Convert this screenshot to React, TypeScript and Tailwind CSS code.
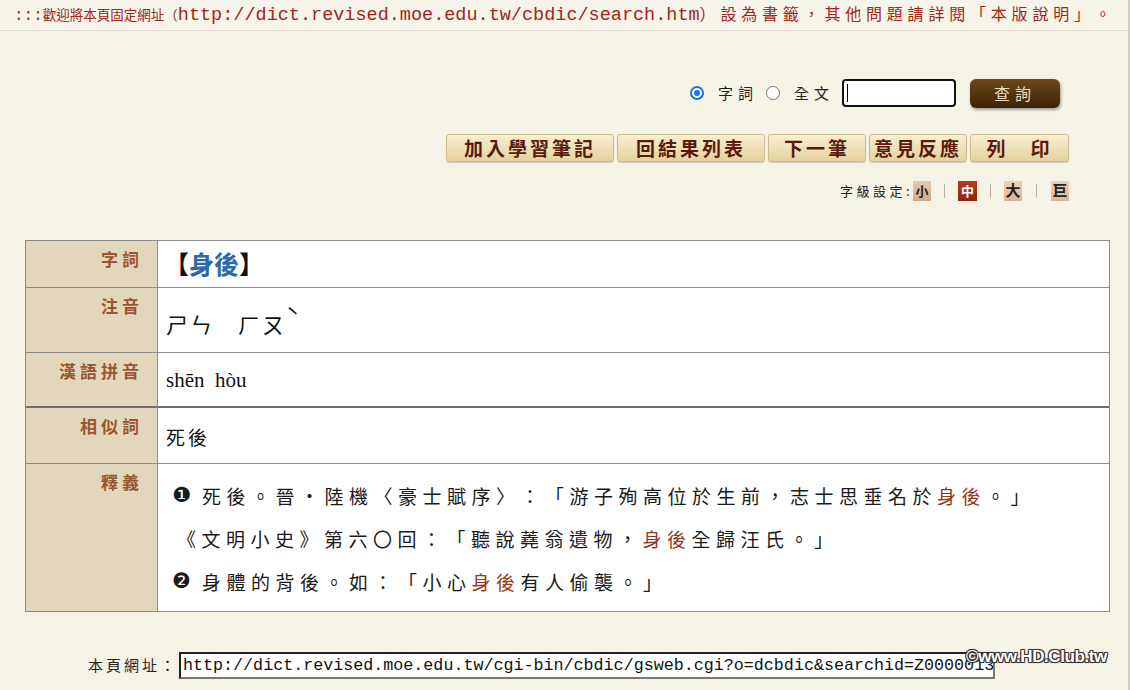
import React from "react";

const cjk = "font-['Noto_Sans_CJK_TC',sans-serif]";

function Radio({ checked }: { checked?: boolean }) {
  return checked ? (
    <span className="inline-flex w-[14px] h-[14px] rounded-full border-2 border-[#1a73e8] bg-white items-center justify-center">
      <span className="w-[6px] h-[6px] rounded-full bg-[#1a73e8]" />
    </span>
  ) : (
    <span className="inline-block w-[14px] h-[14px] rounded-full border border-[#767676] bg-white" />
  );
}

const actions = [
  { label: "加入學習筆記", w: "w-[168px]" },
  { label: "回結果列表", w: "w-[148px]" },
  { label: "下一筆", w: "w-[98px]" },
  { label: "意見反應", w: "w-[98px]" },
  { label: "列　印", w: "w-[99px]" },
];

const Hi = ({ children }: { children: React.ReactNode }) => (
  <span className="text-[#8f3a1c]">{children}</span>
);

function Row({
  label,
  h,
  thick,
  children,
}: {
  label: string;
  h: string;
  thick?: boolean;
  children: React.ReactNode;
}) {
  const b = thick ? "border-b-2 border-b-[#6f6f6f]" : "border-b border-b-[#8c8c8c]";
  return (
    <div className="flex">
      <div
        className={`w-[132px] shrink-0 ${h} ${b} border-r border-r-[#8c8c8c] bg-[#e2d7bb] text-right pr-[14px] pt-[7px] text-[17px] leading-[22px] font-bold tracking-[4px] text-[#9b5631]`}
      >
        {label}
      </div>
      <div className={`flex-1 ${h} ${b} bg-white flex items-center pl-[8px]`}>{children}</div>
    </div>
  );
}

export default function App() {
  return (
    <div
      className={`relative w-[1130px] h-[690px] overflow-hidden bg-[#f5f2e6] border-r-2 border-[#d3cec1] [text-spacing-trim:space-all] ${cjk}`}
    >
      {/* notice bar */}
      <div className="h-[31px] bg-[#f7f4ea] border-b border-[#e4dfd0] pl-[14px] pt-[2px] leading-[22px] text-[#a3241c] whitespace-nowrap">
        <span className="text-[16px] font-['Liberation_Mono',monospace]">:::</span>
        <span className="text-[13.5px]">歡迎將本頁固定網址（</span>
        <span className="text-[18.5px] font-['Liberation_Mono',monospace]">http://dict.revised.moe.edu.tw/cbdic/search.htm</span>
        <span className="text-[16px] tracking-[4.8px]">）設為書籤，其他問題請詳閱「本版說明」。</span>
      </div>

      {/* search */}
      <div className="flex justify-end items-center pr-[68px] mt-[47px] h-[30px] text-[15px] text-[#222]">
        <Radio checked />
        <span className="ml-[14px] tracking-[5px]">字詞</span>
        <span className="ml-[8px] flex"><Radio /></span>
        <span className="ml-[14px] tracking-[5px]">全文</span>
        <div className="ml-[8px] w-[114px] h-[28px] border-2 border-[#111] rounded-[4px] bg-white flex items-center pl-[3px]">
          <span className="w-px h-[18px] bg-black" />
        </div>
        <button className="ml-[14px] w-[90px] h-[29px] rounded-[6px] bg-gradient-to-b from-[#6e481b] to-[#3c2407] text-[#eadfc4] text-[16px] tracking-[5px] shadow-[1px_2px_3px_rgba(0,0,0,0.35)]">
          查詢
        </button>
      </div>

      {/* action buttons */}
      <div className="flex justify-end gap-[3px] pr-[59px] mt-[26px]">
        {actions.map((a) => (
          <button
            key={a.label}
            className={`${a.w} h-[28px] rounded-[3px] border border-[#cdbb8a] bg-gradient-to-b from-[#f8efd2] to-[#e4d19e] text-[19px] leading-[26px] font-bold tracking-[3px] text-[#5b1a0b] shadow-[0_1px_1px_rgba(0,0,0,0.15)]`}
          >
            {a.label}
          </button>
        ))}
      </div>

      {/* font size */}
      <div className="flex justify-end items-center pr-[59px] mt-[18px] h-[21px] text-[13px] text-[#222]">
        <span className="tracking-[3.5px]">字級設定:</span>
        <span className="w-[18px] h-[20px] bg-gradient-to-b from-[#e6c9ae] to-[#d2ac8c] flex items-center justify-center font-bold">小</span>
        <span className="mx-[13px] w-px h-[14px] bg-[#b5b0a5]" />
        <span className="w-[19px] h-[20px] bg-gradient-to-b from-[#b53c1e] to-[#8e2510] text-white flex items-center justify-center font-bold">中</span>
        <span className="mx-[13px] w-px h-[14px] bg-[#b5b0a5]" />
        <span className="w-[18px] h-[20px] bg-gradient-to-b from-[#ead2bb] to-[#d8b799] flex items-center justify-center font-bold text-[15px]">大</span>
        <span className="mx-[14px] w-px h-[14px] bg-[#b5b0a5]" />
        <span className="w-[18px] h-[20px] bg-gradient-to-b from-[#ead2bb] to-[#d8b799] flex items-center justify-center font-bold text-[15px]">巨</span>
      </div>

      {/* entry table */}
      <div className="ml-[25px] mt-[39px] w-[1085px] border-t border-l border-r border-[#8c8c8c]">
        <Row label="字詞" h="h-[47px]">
          <span className="text-[25px] font-bold text-[#111] -ml-[2px]">
            【<span className="text-[#2b6aa6]">身後</span>】
          </span>
        </Row>
        <Row label="注音" h="h-[65px]">
          <span className="text-[22px] text-[#111] pt-[6px] tracking-[2px]">
            ㄕㄣ　ㄏㄡ<span className="relative -top-[8px]">ˋ</span>
          </span>
        </Row>
        <Row label="漢語拼音" h="h-[55px]" thick>
          <span className="text-[21px] text-[#111] font-['Liberation_Serif',serif] pt-[2px]">shēn&nbsp;&nbsp;hòu</span>
        </Row>
        <Row label="相似詞" h="h-[56px]">
          <span className="text-[19px] text-[#111] pt-[4px] tracking-[3px]">死後</span>
        </Row>
        <div className="flex">
          <div className="w-[132px] shrink-0 h-[148px] border-b border-r border-[#8c8c8c] bg-[#e2d7bb] text-right pr-[14px] pt-[7px] text-[17px] leading-[22px] font-bold tracking-[4px] text-[#9b5631]">
            釋義
          </div>
          <div className="flex-1 h-[148px] border-b border-[#8c8c8c] bg-white pt-[10px] pl-[14px] text-[19px] leading-[43px] tracking-[5.5px] text-[#1a1a1a] whitespace-nowrap">
            <div className="flex items-center">
              <span className="w-[30px] text-[21px] font-['DejaVu_Sans',sans-serif] tracking-normal">❶</span>
              <span>
                死後。晉・陸機〈豪士賦序〉：「游子殉高位於生前，志士思垂名於<Hi>身後</Hi>。」
              </span>
            </div>
            <div className="pl-[5px]">
              《文明小史》第六〇回：「聽說蕘翁遺物，<Hi>身後</Hi>全歸汪氏。」
            </div>
            <div className="flex items-center">
              <span className="w-[30px] text-[21px] font-['DejaVu_Sans',sans-serif] tracking-normal">❷</span>
              <span>
                身體的背後。如：「小心<Hi>身後</Hi>有人偷襲。」
              </span>
            </div>
          </div>
        </div>
      </div>

      {/* page url */}
      <div className="flex items-center ml-[88px] mt-[40px]">
        <span className="text-[15px] tracking-[3px] text-[#222]">本頁網址：</span>
        <div className="ml-[1px] w-[816px] h-[27px] border-2 border-t-[#222] border-l-[#222] border-b-[#777] border-r-[#777] bg-white overflow-hidden whitespace-nowrap pl-[2px] text-[16.7px] leading-[23px] font-['Liberation_Mono',monospace] text-[#111]">
          http://dict.revised.moe.edu.tw/cgi-bin/cbdic/gsweb.cgi?o=dcbdic&amp;searchid=Z0000013
        </div>
      </div>

      {/* watermark */}
      <div className="absolute left-[966px] top-[644px] text-[17px] font-bold tracking-[-0.4px] text-white font-['Liberation_Sans',sans-serif] [text-shadow:-1px_-1px_0_#333,1px_-1px_0_#333,-1px_1px_0_#333,1px_1px_0_#333,0_0_2px_#000]">
        ©www.HD.Club.tw
      </div>
    </div>
  );
}
